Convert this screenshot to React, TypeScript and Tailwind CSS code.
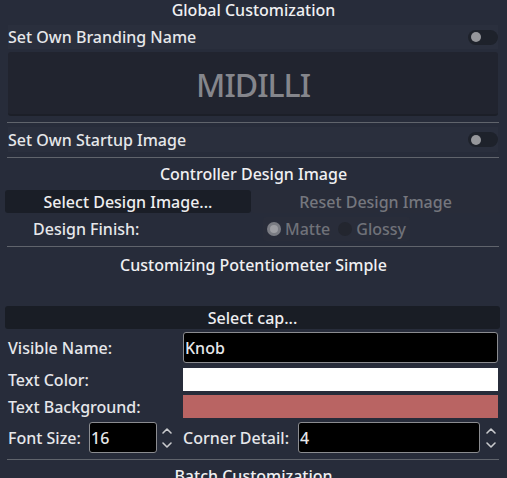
import React from "react";

const font = { fontFamily: '"Noto Sans", "Open Sans", sans-serif' };

function Toggle() {
  return (
    <div className="w-[30px] h-[15px] rounded-full bg-[#1e222b] flex items-center pl-[3px]">
      <div className="w-[10px] h-[10px] rounded-full bg-[#96979b]" />
    </div>
  );
}

function Sep() {
  return <div className="mx-[7px] mr-[8px] h-px bg-[#60646c]" />;
}

function Chevrons() {
  return (
    <svg width="12" height="26" viewBox="0 0 12 26" fill="none" stroke="#c9cacd" strokeWidth="1.6" strokeLinecap="round" strokeLinejoin="round">
      <path d="M2 8 L6 4 L10 8" />
      <path d="M2 18 L6 22 L10 18" />
    </svg>
  );
}

export default function App() {
  return (
    <div className="w-[507px] h-[478px] overflow-hidden bg-[#272c3a] text-[#e6e7ea] text-[16px] leading-none" style={font}>
      <div className="h-[21px] text-center text-[16px] leading-[21px] font-medium text-[#f0f0f2]">
        Global Customization
      </div>
      <div className="mt-[4px] ml-[8px] mr-[9px] h-[24px] bg-[#2a2f3d] flex items-center justify-between">
        <span className="font-medium">Set Own Branding Name</span>
        <Toggle />
      </div>
      <div className="mt-[3px] ml-[8px] mr-[9px] h-[64px] pt-[3px] rounded-[3px] bg-[#21242f] border-b-2 border-[#1c1f28] flex items-center justify-center">
        <span className="text-[32px] font-medium text-[#85868c] tracking-[-1px]">MIDILLI</span>
      </div>
      <div className="mt-[6px]"><Sep /></div>
      <div className="mt-[4px] ml-[8px] mr-[9px] h-[25px] bg-[#2a2f3d] flex items-center justify-between">
        <span className="font-medium">Set Own Startup Image</span>
        <Toggle />
      </div>
      <div className="mt-[5px]"><Sep /></div>
      <div className="h-[32px] flex items-center justify-center text-[16px] font-medium text-[#f0f0f2]">
        Controller Design Image
      </div>
      <div className="flex ml-[5px] mr-[7px] h-[23px]">
        <div className="w-[246px] rounded-[3px] bg-[#1a1e27] flex items-center justify-center font-medium text-[#eeeef0]">
          Select Design Image...
        </div>
        <div className="flex-1 rounded-[3px] bg-[#282c39] flex items-center justify-center font-medium text-[#75777e]">
          Reset Design Image
        </div>
      </div>
      <div className="flex h-[24px] mt-[4px] items-center">
        <div className="w-[263px] pl-[33px] font-medium">Design Finish:</div>
        <div className="flex h-[24px] items-center bg-[#292d3a] rounded-[3px]">
          <div className="flex items-center gap-[4px] px-[4px]">
            <div className="w-[14px] h-[14px] rounded-full bg-[#7a7c83] flex items-center justify-center">
              <div className="w-[8px] h-[8px] rounded-full bg-[#9d9ea3]" />
            </div>
            <span className="font-medium text-[#707279]">Matte</span>
          </div>
          <div className="flex items-center gap-[4px] px-[4px]">
            <div className="w-[14px] h-[14px] rounded-full bg-[#23262f]" />
            <span className="font-medium text-[#707279]">Glossy</span>
          </div>
        </div>
      </div>
      <div className="mt-[5px]"><Sep /></div>
      <div className="h-[35px] flex items-center justify-center text-[16px] font-medium text-[#f0f0f2]">
        Customizing Potentiometer Simple
      </div>
      <div className="mt-[24px] ml-[5px] mr-[7px] h-[23px] rounded-[3px] bg-[#191d25] flex items-center justify-center font-medium text-[#eeeef0]">
        Select cap...
      </div>
      <div className="mt-[3px] flex items-center h-[31px]">
        <div className="w-[183px] pl-[8px] font-medium">Visible Name:</div>
        <div className="w-[315px] h-[31px] bg-black border border-[#8b8c90] rounded-[3px] flex items-center pl-[1px] font-medium">Knob</div>
      </div>
      <div className="mt-[5px] flex items-center h-[23px]">
        <div className="w-[183px] pl-[8px] font-medium">Text Color:</div>
        <div className="w-[315px] h-[23px] bg-white" />
      </div>
      <div className="mt-[4px] flex items-center h-[23px]">
        <div className="w-[183px] pl-[8px] font-medium">Text Background:</div>
        <div className="w-[315px] h-[23px] bg-[#b96463]" />
      </div>
      <div className="mt-[4px] flex items-center h-[31px]">
        <div className="w-[89px] pl-[8px] font-medium">Font Size:</div>
        <div className="w-[68px] h-[31px] bg-black border border-[#8b8c90] rounded-[3px] flex items-center pl-[1px] font-medium">16</div>
        <div className="w-[26px] pl-[4px]"><Chevrons /></div>
        <div className="w-[115px] font-medium">Corner Detail:</div>
        <div className="w-[182px] h-[31px] bg-black border border-[#8b8c90] rounded-[3px] flex items-center pl-[1px] font-medium">4</div>
        <div className="pl-[5px]"><Chevrons /></div>
      </div>
      <div className="mt-[6px]"><Sep /></div>
      <div className="h-[32px] flex items-center justify-center text-[16px] font-medium text-[#f0f0f2]">
        Batch Customization
      </div>
    </div>
  );
}
